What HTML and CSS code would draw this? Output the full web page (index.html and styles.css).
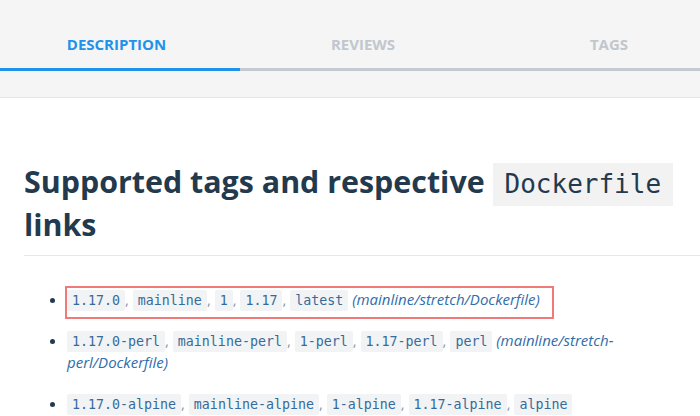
FILE: index.html
```html
<!DOCTYPE html>
<html>
<head>
<meta charset="utf-8">
<link rel="stylesheet" href="styles.css">
</head>
<body>
<header class="header">
  <nav class="tabs">
    <div class="tab active">Description</div>
    <div class="tab">Reviews</div>
    <div class="tab">Tags</div>
  </nav>
</header>
<main class="content">
  <h1 class="title">Supported tags and respective <code class="hcode">Dockerfile</code> links</h1>
  <ul class="list">
    <li><span class="mark"><code>1.17.0</code>, <code>mainline</code>, <code>1</code>, <code>1.17</code>, <code>latest</code> <a class="link">(mainline/stretch/Dockerfile)</a></span></li>
    <li><code>1.17.0-perl</code>, <code>mainline-perl</code>, <code>1-perl</code>, <code>1.17-perl</code>, <code>perl</code> <a class="link">(mainline/stretch-perl/Dockerfile)</a></li>
    <li><code>1.17.0-alpine</code>, <code>mainline-alpine</code>, <code>1-alpine</code>, <code>1.17-alpine</code>, <code>alpine</code> <a class="link">(mainline/alpine/Dockerfile)</a></li>
  </ul>
</main>
</body>
</html>
```
FILE: styles.css
```css
html, body {
  margin: 0;
  padding: 0;
  background: #ffffff;
  overflow: hidden;
}
body {
  font-family: "Open Sans", "Noto Sans", sans-serif;
  width: 700px;
  height: 416px;
}
.header {
  background: #f5f5f5;
  height: 97px;
  border-bottom: 1px solid #e6e6e6;
  overflow: hidden;
}
.tabs {
  display: grid;
  grid-template-columns: 247px 246px 246px;
  margin-left: -7px;
  border-bottom: 3px solid #c4cad0;
  height: 68px;
}
.tab {
  text-transform: uppercase;
  font-weight: 700;
  font-size: 15px;
  color: #c0c7cd;
  text-align: center;
  padding-top: 34px;
  line-height: 20px;
  height: 34px;
}
.tab.active {
  color: #2192ea;
  border-bottom: 3px solid #2192ea;
}
.content {
  padding: 0 0 0 24px;
}
.title {
  margin: 62px 0 0 0;
  font-size: 30.4px;
  line-height: 43px;
  font-weight: 700;
  color: #233a4e;
  padding-bottom: 9px;
  border-bottom: 1px solid #e8e8e8;
}
.hcode {
  font-family: "DejaVu Sans Mono", monospace;
  font-weight: 400;
  font-size: 26px;
  line-height: 1;
  color: #233a4e;
  background: #f2f2f2;
  padding: 6px 12px 7px 12px;
  margin-left: 0;
  border-radius: 0;
}
.list {
  margin: 32px 0 0 0;
  padding-left: 43px;
  font-size: 15px;
  line-height: 22px;
  color: #8a9aa8;
}
.list li {
  margin-bottom: 19px;
  color: #8a9aa8;
}
.list li::marker {
  color: #24394e;
}
code {
  font-family: "DejaVu Sans Mono", monospace;
  font-size: 13.3px;
  line-height: 1;
  background: #f2f3f4;
  color: #356b9b;
  padding: 3px 5px;
  border-radius: 2px;
}
.link {
  color: #2f6dab;
  font-style: italic;
}
.mark {
  border: 2px solid #f07a7a;
  padding: 1px 12px 8px 0;
  margin-left: -2px;
}
```
